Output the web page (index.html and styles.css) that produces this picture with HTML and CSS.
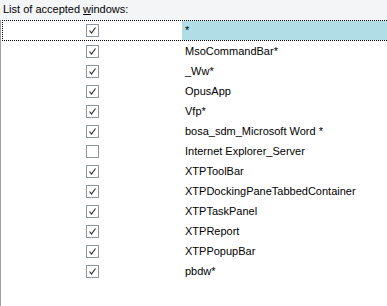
FILE: index.html
```html
<!DOCTYPE html>
<html lang="en">
<head>
  <meta charset="UTF-8" />
  <title>Accepted windows</title>
  <link rel="stylesheet" href="styles.css">
</head>
<body>

  <div class="caption">List of accepted <u>w</u>indows:</div>

  <div class="win-list" id="winList"></div>

  <script>
    const list = document.getElementById('winList');

    const items = [
      { name: '*', on: true },
      { name: 'MsoCommandBar*', on: true },
      { name: '_Ww*', on: true },
      { name: 'OpusApp', on: true },
      { name: 'Vfp*', on: true },
      { name: 'bosa_sdm_Microsoft Word *', on: true },
      { name: 'Internet Explorer_Server', on: false },
      { name: 'XTPToolBar', on: true },
      { name: 'XTPDockingPaneTabbedContainer', on: true },
      { name: 'XTPTaskPanel', on: true },
      { name: 'XTPReport', on: true },
      { name: 'XTPPopupBar', on: true },
      { name: 'pbdw*', on: true }
    ];

    const tick = '<svg width="13" height="13" viewBox="0 0 13 13">' +
      '<rect x="0.5" y="0.5" width="12" height="12" fill="#fff" stroke="#8d959e"/>';

    items.forEach((item, i) => {
      const row = document.createElement('div');
      row.classList.add('row');
      if (i === 0) row.classList.add('focused');

      const box = document.createElement('div');
      box.classList.add('check-cell');
      box.innerHTML = tick +
        (item.on ? '<path d="M3.5 6.5 L5.5 9 L9.5 3.5" fill="none" stroke="#222" stroke-width="1.1"/>' : '') +
        '</svg>';

      const name = document.createElement('div');
      name.classList.add('name-cell');
      name.textContent = item.name;

      row.appendChild(box);
      row.appendChild(name);
      list.appendChild(row);
    });
  </script>

</body>
</html>
```

FILE: styles.css
```css
body {
  margin: 0;
  height: 306px;
  overflow: hidden;
  background: #f4f5f7;
  font-family: "Liberation Sans", Arial, sans-serif;
  font-size: 11px;
  color: #000;
}

.caption {
  height: 20px;
  line-height: 18px;
  padding-left: 3px;
}

.caption u {
  text-underline-offset: 1px;
}

.win-list {
  height: 286px;
  background: #fff;
  border-left: 1px solid #a0a0a0;
}

.row {
  display: grid;
  grid-template-columns: 181px 1fr;
  height: 20px;
  position: relative;
}

.row.focused {
  height: 21px;
}

.row.focused::after {
  content: "";
  position: absolute;
  left: 1px;
  top: 0;
  right: -4px;
  bottom: 0;
  border: 1px dotted #000;
  pointer-events: none;
}

.check-cell {
  padding-left: 85px;
  padding-top: 4px;
}

.check-cell svg {
  display: block;
}

.name-cell {
  padding-left: 3px;
  line-height: 20px;
  white-space: nowrap;
}

.row.focused .name-cell {
  margin: 1px 0;
  line-height: 19px;
  background: #b0dde6;
}
```
